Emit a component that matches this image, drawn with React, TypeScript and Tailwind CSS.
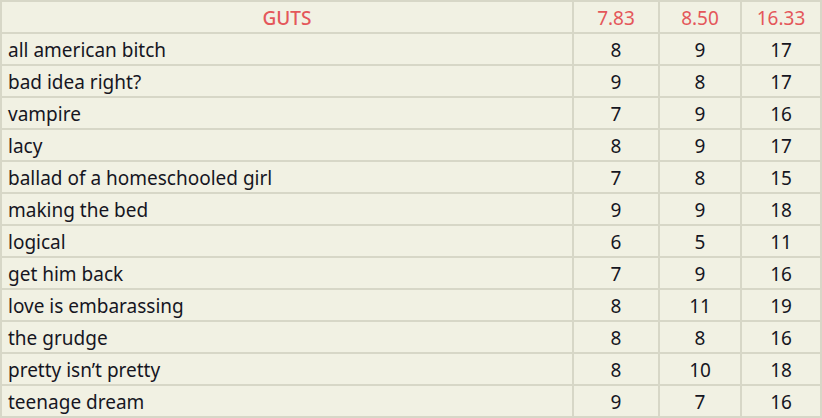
import React from 'react';

const rows: [string, number, number, number][] = [
    ['all american bitch', 8, 9, 17],
    ['bad idea right?', 9, 8, 17],
    ['vampire', 7, 9, 16],
    ['lacy', 8, 9, 17],
    ['ballad of a homeschooled girl', 7, 8, 15],
    ['making the bed', 9, 9, 18],
    ['logical', 6, 5, 11],
    ['get him back', 7, 9, 16],
    ['love is embarassing', 8, 11, 19],
    ['the grudge', 8, 8, 16],
    ['pretty isn\u2019t pretty', 8, 10, 18],
    ['teenage dream', 9, 7, 16],
];

const cell = 'bg-[#f1f1e3] h-[30px] flex items-center pt-[2px]';

export default function App() {
    return (
        <div className="w-[822px] h-[418px] bg-[#d7d7c7] p-[2px] grid grid-cols-[570px_84px_80px_78px] auto-rows-[30px] gap-[2px] text-[19px] text-[#16161f] font-['Noto_Sans','Liberation_Sans',sans-serif]">
            <div className={`${cell} justify-center text-[#e4575a] font-medium`}>GUTS</div>
            <div className={`${cell} justify-center text-[#e4575a]`}>7.83</div>
            <div className={`${cell} justify-center text-[#e4575a]`}>8.50</div>
            <div className={`${cell} justify-center text-[#e4575a]`}>16.33</div>
            {rows.map(([name, a, b, total]) => (
                <React.Fragment key={name}>
                    <div className={`${cell} pl-[6px]`}>{name}</div>
                    <div className={`${cell} justify-center`}>{a}</div>
                    <div className={`${cell} justify-center`}>{b}</div>
                    <div className={`${cell} justify-center`}>{total}</div>
                </React.Fragment>
            ))}
        </div>
    );
}
